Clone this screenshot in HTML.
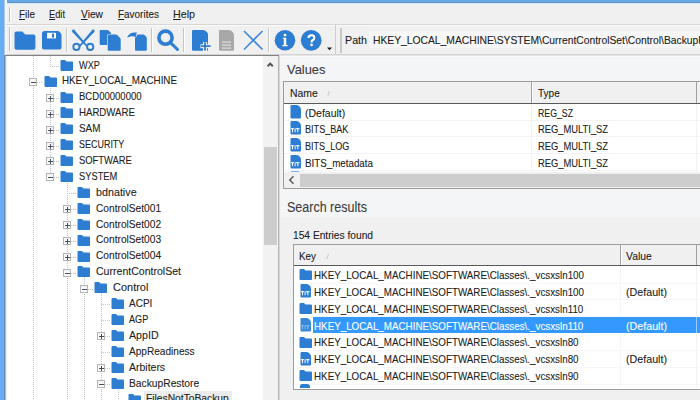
<!DOCTYPE html><html><head><meta charset="utf-8"><style>

html,body{margin:0;padding:0;}
body{width:700px;height:400px;overflow:hidden;position:relative;background:#f0f0f0;font-family:"Liberation Sans", sans-serif;}
.t{position:absolute;white-space:nowrap;transform-origin:0 0;line-height:1;-webkit-text-stroke:0.1px currentColor;}
.t u{text-decoration:underline;text-underline-offset:0.5px;text-decoration-thickness:1px;}

</style></head><body>
<div style="position:absolute;left:0px;top:0px;width:700px;height:5px;background:linear-gradient(#64a8e8 0 1px,#6aa6e0 1px 2px,#5f91c9 2px 3px,#d8ecf8 3px 4px,#e8f0f8 4px 5px);"></div>
<div style="position:absolute;left:0px;top:0px;width:7px;height:55px;background:linear-gradient(to right,#64b0f5 0 2px,#6ea8f0 2px 3px,#78a6e6 3px 4px,#a8c8ec 4px 5px,#f4f6f8 5px 7px);"></div>
<div style="position:absolute;left:0px;top:55px;width:7px;height:345px;background:linear-gradient(to right,#64b0f5 0 2px,#6ea8f0 2px 3px,#78a6e6 3px 4px,#6f8fb5 4px 5px,#a9bccc 5px 6px,#eaf2f9 6px 7px);"></div>
<div style="position:absolute;left:7px;top:5px;width:693px;height:19px;background:#f0f0f0;"></div>
<div style="position:absolute;left:9px;top:7px;width:1px;height:15px;background:#bdbdbd;"></div>
<div style="position:absolute;left:10px;top:7px;width:1px;height:15px;background:#ffffff;"></div>
<div class="t" style="left:19.3px;top:8.87px;font-size:11.5px;color:#222222;transform:scaleX(0.8566599999999999);"><u>F</u>ile</div>
<div class="t" style="left:49.3px;top:8.87px;font-size:11.5px;color:#222222;transform:scaleX(0.806925);"><u>E</u>dit</div>
<div class="t" style="left:80.7px;top:8.87px;font-size:11.5px;color:#222222;transform:scaleX(0.88711);"><u>V</u>iew</div>
<div class="t" style="left:117.6px;top:8.87px;font-size:11.5px;color:#222222;transform:scaleX(0.8647799999999999);"><u>F</u>avorites</div>
<div class="t" style="left:173.3px;top:8.87px;font-size:11.5px;color:#222222;transform:scaleX(0.9338);"><u>H</u>elp</div>
<div style="position:absolute;left:6px;top:24px;width:694px;height:1px;background:#d6d6d6;"></div>
<div style="position:absolute;left:6px;top:25px;width:694px;height:1px;background:#fbfbfb;"></div>
<div style="position:absolute;left:9px;top:27px;width:1px;height:24px;background:#bdbdbd;"></div>
<div style="position:absolute;left:10px;top:27px;width:1px;height:24px;background:#ffffff;"></div>
<div style="position:absolute;left:66px;top:28px;width:1px;height:24px;background:#c5c5c5;"></div>
<div style="position:absolute;left:67px;top:28px;width:1px;height:24px;background:#ffffff;"></div>
<div style="position:absolute;left:151px;top:28px;width:1px;height:24px;background:#c5c5c5;"></div>
<div style="position:absolute;left:152px;top:28px;width:1px;height:24px;background:#ffffff;"></div>
<div style="position:absolute;left:183px;top:28px;width:1px;height:24px;background:#c5c5c5;"></div>
<div style="position:absolute;left:184px;top:28px;width:1px;height:24px;background:#ffffff;"></div>
<div style="position:absolute;left:268px;top:28px;width:1px;height:24px;background:#c5c5c5;"></div>
<div style="position:absolute;left:269px;top:28px;width:1px;height:24px;background:#ffffff;"></div>
<svg style="position:absolute;left:14px;top:31px" width="22" height="20" viewBox="0 0 22 20"><path d="M0.5 2.5 Q0.5 0.6 2.4 0.6 L8.4 0.6 L11.2 3.6 L19.5 3.6 Q21.4 3.6 21.4 5.5 L21.4 17 Q21.4 18.8 19.5 18.8 L2.4 18.8 Q0.5 18.8 0.5 17 Z" fill="#2d7dd2"/></svg>
<svg style="position:absolute;left:42px;top:31px" width="20" height="20" viewBox="0 0 20 20"><path d="M0 2.5 Q0 0 2.5 0 L15.6 0 Q16.6 0 17.4 0.8 L18.7 2.1 Q19.5 2.9 19.5 4 L19.5 16 Q19.5 18.6 17 18.6 L2.5 18.6 Q0 18.6 0 16 Z" fill="#2d7dd2"/><rect x="5" y="1.8" width="9" height="5.6" fill="#fff"/><rect x="10" y="2.6" width="2" height="4" fill="#2d7dd2"/></svg>
<svg style="position:absolute;left:70px;top:29px" width="28" height="24" viewBox="0 0 28 24"><g fill="#2d7dd2"><path d="M2.357 2.934 L4.443 1.066 L17.596 16.666 L16.404 17.734 Z"/><path d="M24.243 2.934 L22.157 1.066 L9.004 16.666 L10.196 17.734 Z"/><circle cx="3.4" cy="2" r="1.4"/><circle cx="23.2" cy="2" r="1.4"/></g><g stroke="#2d7dd2" fill="none" stroke-width="1.9"><circle cx="6.4" cy="17.9" r="3.1"/><circle cx="20.2" cy="17.9" r="3.1"/></g></svg>
<svg style="position:absolute;left:99px;top:29px" width="23" height="23" viewBox="0 0 23 23"><path d="M0.7 1.9 Q0.7 0.9 1.7 0.9 L8.2 0.9 Q9 0.9 9.6 1.5 L11.4 3.3 Q12 3.9 12 4.7 L12 15 Q12 16 11 16 L1.7 16 Q0.7 16 0.7 15 Z" fill="#2d7dd2"/><path d="M8.7 6.5 Q8.7 5.5 9.7 5.5 L16.8 5.5 Q17.6 5.5 18.2 6.1 L21.1 9 Q21.7 9.6 21.7 10.4 L21.7 20.7 Q21.7 21.7 20.7 21.7 L9.7 21.7 Q8.7 21.7 8.7 20.7 Z" fill="#2d7dd2" stroke="#f0f0f0" stroke-width="1.2" paint-order="stroke"/></svg>
<svg style="position:absolute;left:124px;top:28px" width="24" height="24" viewBox="0 0 24 24"><path d="M11 9.6 L13.6 6.6 L19.2 6.6 Q20.2 6.6 21 7.4 L22 8.4 Q22.8 9.2 22.8 10.4 L22.8 21.8 Q22.8 22.8 21.8 22.8 L12 22.8 Q11 22.8 11 21.8 Z" fill="#2d7dd2"/><path d="M3.2 9.2 Q5.4 4.9 9.6 4.6 L12.8 4.4 L11.8 9 Q9 8 6.5 8.4 Q4.6 8.8 3.2 9.5 Z" fill="#2d7dd2" stroke="#f0f0f0" stroke-width="0.9" paint-order="stroke"/></svg>
<svg style="position:absolute;left:156px;top:28px" width="24" height="24" viewBox="0 0 24 24"><circle cx="9.5" cy="9.7" r="6.6" stroke="#2d7dd2" stroke-width="3.6" fill="none"/><path d="M14.5 14.7 L21.5 21.5" stroke="#2d7dd2" stroke-width="3" stroke-linecap="round"/></svg>
<svg style="position:absolute;left:191px;top:29px" width="22" height="23" viewBox="0 0 22 23"><path d="M1 2.2 Q1 1 2.2 1 L12 1 Q14 1 15.5 2.8 L17 4.6 L17 21.8 L2.2 21.8 Q1 21.8 1 20.6 Z" fill="#2d7dd2"/><path d="M14 13 L14 22 M9.5 17.2 L20 17.2" stroke="#f0f0f0" stroke-width="4"/><path d="M14 13.2 L14 21.6 M10 17.2 L19.6 17.2" stroke="#2d7dd2" stroke-width="1.8"/></svg>
<svg style="position:absolute;left:218px;top:29px" width="18" height="23" viewBox="0 0 18 23"><path d="M1 2.2 Q1 1 2.2 1 L11 1 Q13 1 14.2 2.6 L16 5 L16 20.6 Q16 21.8 14.8 21.8 L2.2 21.8 Q1 21.8 1 20.6 Z" fill="#a8a8a8"/><g fill="#e8e8e8"><rect x="4" y="12.6" width="9" height="1"/><rect x="4" y="15.6" width="9" height="1"/><rect x="4" y="18.6" width="9" height="1"/></g></svg>
<svg style="position:absolute;left:242px;top:29px" width="23" height="23" viewBox="0 0 23 23"><path d="M2 2 L20.5 20.5 M20.5 2 L2 20.5" stroke="#4189d6" stroke-width="1.6"/></svg>
<svg style="position:absolute;left:272.6px;top:29px" width="24" height="24" viewBox="0 0 24 24"><circle cx="12" cy="11.3" r="10.3" fill="#2d7dd2"/><circle cx="12" cy="6.1" r="1.45" fill="#fff"/><path d="M9.9 8.8 L13.2 8.8 L13.2 16 L14.6 16 L14.6 17.3 L9.4 17.3 L9.4 16 L10.8 16 L10.8 10 L9.9 10 Z" fill="#fff"/></svg>
<svg style="position:absolute;left:299px;top:29px" width="24" height="24" viewBox="0 0 24 24"><circle cx="12.2" cy="11.3" r="10.4" fill="#2d7dd2"/><path d="M9.5 9 Q9.5 6.3 12.4 6.3 Q15.3 6.3 15.3 8.7 Q15.3 10.4 13.6 11.2 Q12.6 11.7 12.6 12.8 L12.6 13.5" stroke="#fff" stroke-width="2.1" fill="none"/><circle cx="12.6" cy="15.9" r="1.35" fill="#fff"/></svg>
<svg style="position:absolute;left:327px;top:47px" width="6" height="4" viewBox="0 0 6 4"><path d="M0 0.5 L5 0.5 L2.5 3.2 Z" fill="#1a1a1a"/></svg>
<div style="position:absolute;left:335px;top:25px;width:1px;height:29px;background:#cdcdcd;"></div>
<div style="position:absolute;left:340px;top:28px;width:2px;height:25px;background:#c8c8c8;"></div>
<div class="t" style="left:344.5px;top:34.87px;font-size:11.5px;color:#222222;transform:scaleX(0.93);">Path</div>
<div style="position:absolute;left:369px;top:31px;width:331px;height:17px;background:#f7f7f7;"></div>
<div class="t" style="left:373.0px;top:34.87px;font-size:11.5px;color:#222222;transform:scaleX(0.896);">HKEY_LOCAL_MACHINE\SYSTEM\CurrentControlSet\Control\BackupRestore\FilesNotToBackup</div>
<div style="position:absolute;left:6px;top:54px;width:694px;height:1px;background:#d2d2d2;"></div>
<div style="position:absolute;left:5px;top:55px;width:274px;height:1px;background:#828282;"></div>
<div style="position:absolute;left:279px;top:55px;width:421px;height:1px;background:#e6e6e6;"></div>
<div style="position:absolute;left:7px;top:56px;width:256px;height:344px;background:#ffffff;"></div>
<div style="position:absolute;left:263px;top:56px;width:15px;height:344px;background:#f2f2f2;"></div>
<div style="position:absolute;left:264px;top:147px;width:13px;height:98px;background:#cdcdcd;"></div>
<svg style="position:absolute;left:266px;top:61px" width="10" height="8" viewBox="0 0 10 8"><path d="M1.6 5.3 L4.2 2.6 L6.8 5.3" stroke="#555" stroke-width="2" fill="none"/></svg>
<div style="position:absolute;left:278px;top:56px;width:1px;height:344px;background:#b4b4b4;"></div>
<div style="position:absolute;left:279px;top:56px;width:1px;height:344px;background:#d8d8d8;"></div>
<div style="position:absolute;left:144px;top:390.6px;width:88px;height:16px;background:#ececec;"></div>
<div style="position:absolute;left:33px;top:56.00px;width:1px;height:344.00px;background:repeating-linear-gradient(to bottom,#c4c4c4 0 1px,transparent 1px 2px)"></div>
<div style="position:absolute;left:50px;top:56.00px;width:1px;height:10.00px;background:repeating-linear-gradient(to bottom,#c4c4c4 0 1px,transparent 1px 2px)"></div>
<div style="position:absolute;left:50px;top:85.90px;width:1px;height:91.40px;background:repeating-linear-gradient(to bottom,#c4c4c4 0 1px,transparent 1px 2px)"></div>
<div style="position:absolute;left:67px;top:181.30px;width:1px;height:87.40px;background:repeating-linear-gradient(to bottom,#c4c4c4 0 1px,transparent 1px 2px)"></div>
<div style="position:absolute;left:67px;top:277.70px;width:1px;height:122.30px;background:repeating-linear-gradient(to bottom,#c4c4c4 0 1px,transparent 1px 2px)"></div>
<div style="position:absolute;left:84px;top:276.70px;width:1px;height:7.90px;background:repeating-linear-gradient(to bottom,#c4c4c4 0 1px,transparent 1px 2px)"></div>
<div style="position:absolute;left:84px;top:293.60px;width:1px;height:106.40px;background:repeating-linear-gradient(to bottom,#c4c4c4 0 1px,transparent 1px 2px)"></div>
<div style="position:absolute;left:101px;top:292.60px;width:1px;height:107.40px;background:repeating-linear-gradient(to bottom,#c4c4c4 0 1px,transparent 1px 2px)"></div>
<div style="position:absolute;left:118px;top:388.00px;width:1px;height:12.00px;background:repeating-linear-gradient(to bottom,#c4c4c4 0 1px,transparent 1px 2px)"></div>
<div style="position:absolute;left:50.00px;top:66.00px;width:9.60px;height:1px;background:repeating-linear-gradient(to right,#c4c4c4 0 1px,transparent 1px 2px)"></div>
<svg style="position:absolute;left:60.2px;top:59.7px" width="14" height="12" viewBox="0 0 14 12"><path d="M0.5 1 Q0.5 0 1.5 0 L5 0 L6.5 1.6 L12 1.6 Q13 1.6 13 2.6 L13 10.2 Q13 11 12 11 L1.5 11 Q0.5 11 0.5 10 Z" fill="#2d7dd2"/></svg>
<div class="t" style="left:79.19999999999999px;top:59.57px;font-size:11.5px;color:#222222;transform:scaleX(0.7957599999999999);">WXP</div>
<div style="position:absolute;left:33.00px;top:82.00px;width:10.00px;height:1px;background:repeating-linear-gradient(to right,#c4c4c4 0 1px,transparent 1px 2px)"></div>
<div style="position:absolute;left:29px;top:78px;width:6px;height:6px;border:1px solid #b4b4b4;background:linear-gradient(#f4f4f4,#ffffff)"></div>
<div style="position:absolute;left:31px;top:82px;width:5px;height:1px;background:#4a5060;"></div>
<svg style="position:absolute;left:43.6px;top:75.60000000000001px" width="14" height="12" viewBox="0 0 14 12"><path d="M0.5 1 Q0.5 0 1.5 0 L5 0 L6.5 1.6 L12 1.6 Q13 1.6 13 2.6 L13 10.2 Q13 11 12 11 L1.5 11 Q0.5 11 0.5 10 Z" fill="#2d7dd2"/></svg>
<div class="t" style="left:62.3px;top:75.47px;font-size:11.5px;color:#222222;transform:scaleX(0.8525999999999999);">HKEY_LOCAL_MACHINE</div>
<div style="position:absolute;left:50.00px;top:98.00px;width:9.60px;height:1px;background:repeating-linear-gradient(to right,#c4c4c4 0 1px,transparent 1px 2px)"></div>
<div style="position:absolute;left:46px;top:94px;width:6px;height:6px;border:1px solid #b4b4b4;background:linear-gradient(#f4f4f4,#ffffff)"></div>
<div style="position:absolute;left:48px;top:98px;width:5px;height:1px;background:#4a5060;"></div>
<div style="position:absolute;left:50px;top:96px;width:1px;height:5px;background:#4a5060;"></div>
<svg style="position:absolute;left:60.2px;top:91.5px" width="14" height="12" viewBox="0 0 14 12"><path d="M0.5 1 Q0.5 0 1.5 0 L5 0 L6.5 1.6 L12 1.6 Q13 1.6 13 2.6 L13 10.2 Q13 11 12 11 L1.5 11 Q0.5 11 0.5 10 Z" fill="#2d7dd2"/></svg>
<div class="t" style="left:79.19999999999999px;top:91.37px;font-size:11.5px;color:#222222;transform:scaleX(0.8292549999999999);">BCD00000000</div>
<div style="position:absolute;left:50.00px;top:114.00px;width:9.60px;height:1px;background:repeating-linear-gradient(to right,#c4c4c4 0 1px,transparent 1px 2px)"></div>
<div style="position:absolute;left:46px;top:110px;width:6px;height:6px;border:1px solid #b4b4b4;background:linear-gradient(#f4f4f4,#ffffff)"></div>
<div style="position:absolute;left:48px;top:114px;width:5px;height:1px;background:#4a5060;"></div>
<div style="position:absolute;left:50px;top:112px;width:1px;height:5px;background:#4a5060;"></div>
<svg style="position:absolute;left:60.2px;top:107.4px" width="14" height="12" viewBox="0 0 14 12"><path d="M0.5 1 Q0.5 0 1.5 0 L5 0 L6.5 1.6 L12 1.6 Q13 1.6 13 2.6 L13 10.2 Q13 11 12 11 L1.5 11 Q0.5 11 0.5 10 Z" fill="#2d7dd2"/></svg>
<div class="t" style="left:79.19999999999999px;top:107.27px;font-size:11.5px;color:#222222;transform:scaleX(0.8383899999999999);">HARDWARE</div>
<div style="position:absolute;left:50.00px;top:130.00px;width:9.60px;height:1px;background:repeating-linear-gradient(to right,#c4c4c4 0 1px,transparent 1px 2px)"></div>
<div style="position:absolute;left:46px;top:126px;width:6px;height:6px;border:1px solid #b4b4b4;background:linear-gradient(#f4f4f4,#ffffff)"></div>
<div style="position:absolute;left:48px;top:130px;width:5px;height:1px;background:#4a5060;"></div>
<div style="position:absolute;left:50px;top:128px;width:1px;height:5px;background:#4a5060;"></div>
<svg style="position:absolute;left:60.2px;top:123.30000000000001px" width="14" height="12" viewBox="0 0 14 12"><path d="M0.5 1 Q0.5 0 1.5 0 L5 0 L6.5 1.6 L12 1.6 Q13 1.6 13 2.6 L13 10.2 Q13 11 12 11 L1.5 11 Q0.5 11 0.5 10 Z" fill="#2d7dd2"/></svg>
<div class="t" style="left:79.19999999999999px;top:123.17px;font-size:11.5px;color:#222222;transform:scaleX(0.8627499999999999);">SAM</div>
<div style="position:absolute;left:50.00px;top:146.00px;width:9.60px;height:1px;background:repeating-linear-gradient(to right,#c4c4c4 0 1px,transparent 1px 2px)"></div>
<div style="position:absolute;left:46px;top:142px;width:6px;height:6px;border:1px solid #b4b4b4;background:linear-gradient(#f4f4f4,#ffffff)"></div>
<div style="position:absolute;left:48px;top:146px;width:5px;height:1px;background:#4a5060;"></div>
<div style="position:absolute;left:50px;top:144px;width:1px;height:5px;background:#4a5060;"></div>
<svg style="position:absolute;left:60.2px;top:139.2px" width="14" height="12" viewBox="0 0 14 12"><path d="M0.5 1 Q0.5 0 1.5 0 L5 0 L6.5 1.6 L12 1.6 Q13 1.6 13 2.6 L13 10.2 Q13 11 12 11 L1.5 11 Q0.5 11 0.5 10 Z" fill="#2d7dd2"/></svg>
<div class="t" style="left:79.19999999999999px;top:139.07px;font-size:11.5px;color:#222222;transform:scaleX(0.77952);">SECURITY</div>
<div style="position:absolute;left:50.00px;top:161.00px;width:9.60px;height:1px;background:repeating-linear-gradient(to right,#c4c4c4 0 1px,transparent 1px 2px)"></div>
<div style="position:absolute;left:46px;top:157px;width:6px;height:6px;border:1px solid #b4b4b4;background:linear-gradient(#f4f4f4,#ffffff)"></div>
<div style="position:absolute;left:48px;top:161px;width:5px;height:1px;background:#4a5060;"></div>
<div style="position:absolute;left:50px;top:159px;width:1px;height:5px;background:#4a5060;"></div>
<svg style="position:absolute;left:60.2px;top:155.10000000000002px" width="14" height="12" viewBox="0 0 14 12"><path d="M0.5 1 Q0.5 0 1.5 0 L5 0 L6.5 1.6 L12 1.6 Q13 1.6 13 2.6 L13 10.2 Q13 11 12 11 L1.5 11 Q0.5 11 0.5 10 Z" fill="#2d7dd2"/></svg>
<div class="t" style="left:79.19999999999999px;top:154.97px;font-size:11.5px;color:#222222;transform:scaleX(0.81606);">SOFTWARE</div>
<div style="position:absolute;left:50.00px;top:177.00px;width:9.60px;height:1px;background:repeating-linear-gradient(to right,#c4c4c4 0 1px,transparent 1px 2px)"></div>
<div style="position:absolute;left:46px;top:173px;width:6px;height:6px;border:1px solid #b4b4b4;background:linear-gradient(#f4f4f4,#ffffff)"></div>
<div style="position:absolute;left:48px;top:177px;width:5px;height:1px;background:#4a5060;"></div>
<svg style="position:absolute;left:60.2px;top:171.0px" width="14" height="12" viewBox="0 0 14 12"><path d="M0.5 1 Q0.5 0 1.5 0 L5 0 L6.5 1.6 L12 1.6 Q13 1.6 13 2.6 L13 10.2 Q13 11 12 11 L1.5 11 Q0.5 11 0.5 10 Z" fill="#2d7dd2"/></svg>
<div class="t" style="left:79.19999999999999px;top:170.87px;font-size:11.5px;color:#222222;transform:scaleX(0.810985);">SYSTEM</div>
<div style="position:absolute;left:67.00px;top:193.00px;width:9.00px;height:1px;background:repeating-linear-gradient(to right,#c4c4c4 0 1px,transparent 1px 2px)"></div>
<svg style="position:absolute;left:76.6px;top:186.9px" width="14" height="12" viewBox="0 0 14 12"><path d="M0.5 1 Q0.5 0 1.5 0 L5 0 L6.5 1.6 L12 1.6 Q13 1.6 13 2.6 L13 10.2 Q13 11 12 11 L1.5 11 Q0.5 11 0.5 10 Z" fill="#2d7dd2"/></svg>
<div class="t" style="left:95.9px;top:186.77px;font-size:11.5px;color:#222222;transform:scaleX(0.9338);">bdnative</div>
<div style="position:absolute;left:67.00px;top:209.00px;width:9.00px;height:1px;background:repeating-linear-gradient(to right,#c4c4c4 0 1px,transparent 1px 2px)"></div>
<div style="position:absolute;left:63px;top:205px;width:6px;height:6px;border:1px solid #b4b4b4;background:linear-gradient(#f4f4f4,#ffffff)"></div>
<div style="position:absolute;left:65px;top:209px;width:5px;height:1px;background:#4a5060;"></div>
<div style="position:absolute;left:67px;top:207px;width:1px;height:5px;background:#4a5060;"></div>
<svg style="position:absolute;left:76.6px;top:202.8px" width="14" height="12" viewBox="0 0 14 12"><path d="M0.5 1 Q0.5 0 1.5 0 L5 0 L6.5 1.6 L12 1.6 Q13 1.6 13 2.6 L13 10.2 Q13 11 12 11 L1.5 11 Q0.5 11 0.5 10 Z" fill="#2d7dd2"/></svg>
<div class="t" style="left:95.9px;top:202.67px;font-size:11.5px;color:#222222;transform:scaleX(0.8850799999999999);">ControlSet001</div>
<div style="position:absolute;left:67.00px;top:225.00px;width:9.00px;height:1px;background:repeating-linear-gradient(to right,#c4c4c4 0 1px,transparent 1px 2px)"></div>
<div style="position:absolute;left:63px;top:221px;width:6px;height:6px;border:1px solid #b4b4b4;background:linear-gradient(#f4f4f4,#ffffff)"></div>
<div style="position:absolute;left:65px;top:225px;width:5px;height:1px;background:#4a5060;"></div>
<div style="position:absolute;left:67px;top:223px;width:1px;height:5px;background:#4a5060;"></div>
<svg style="position:absolute;left:76.6px;top:218.7px" width="14" height="12" viewBox="0 0 14 12"><path d="M0.5 1 Q0.5 0 1.5 0 L5 0 L6.5 1.6 L12 1.6 Q13 1.6 13 2.6 L13 10.2 Q13 11 12 11 L1.5 11 Q0.5 11 0.5 10 Z" fill="#2d7dd2"/></svg>
<div class="t" style="left:95.9px;top:218.57px;font-size:11.5px;color:#222222;transform:scaleX(0.8850799999999999);">ControlSet002</div>
<div style="position:absolute;left:67.00px;top:241.00px;width:9.00px;height:1px;background:repeating-linear-gradient(to right,#c4c4c4 0 1px,transparent 1px 2px)"></div>
<div style="position:absolute;left:63px;top:237px;width:6px;height:6px;border:1px solid #b4b4b4;background:linear-gradient(#f4f4f4,#ffffff)"></div>
<div style="position:absolute;left:65px;top:241px;width:5px;height:1px;background:#4a5060;"></div>
<div style="position:absolute;left:67px;top:239px;width:1px;height:5px;background:#4a5060;"></div>
<svg style="position:absolute;left:76.6px;top:234.60000000000002px" width="14" height="12" viewBox="0 0 14 12"><path d="M0.5 1 Q0.5 0 1.5 0 L5 0 L6.5 1.6 L12 1.6 Q13 1.6 13 2.6 L13 10.2 Q13 11 12 11 L1.5 11 Q0.5 11 0.5 10 Z" fill="#2d7dd2"/></svg>
<div class="t" style="left:95.9px;top:234.47px;font-size:11.5px;color:#222222;transform:scaleX(0.8850799999999999);">ControlSet003</div>
<div style="position:absolute;left:67.00px;top:257.00px;width:9.00px;height:1px;background:repeating-linear-gradient(to right,#c4c4c4 0 1px,transparent 1px 2px)"></div>
<div style="position:absolute;left:63px;top:253px;width:6px;height:6px;border:1px solid #b4b4b4;background:linear-gradient(#f4f4f4,#ffffff)"></div>
<div style="position:absolute;left:65px;top:257px;width:5px;height:1px;background:#4a5060;"></div>
<div style="position:absolute;left:67px;top:255px;width:1px;height:5px;background:#4a5060;"></div>
<svg style="position:absolute;left:76.6px;top:250.5px" width="14" height="12" viewBox="0 0 14 12"><path d="M0.5 1 Q0.5 0 1.5 0 L5 0 L6.5 1.6 L12 1.6 Q13 1.6 13 2.6 L13 10.2 Q13 11 12 11 L1.5 11 Q0.5 11 0.5 10 Z" fill="#2d7dd2"/></svg>
<div class="t" style="left:95.9px;top:250.37px;font-size:11.5px;color:#222222;transform:scaleX(0.8850799999999999);">ControlSet004</div>
<div style="position:absolute;left:67.00px;top:273.00px;width:9.00px;height:1px;background:repeating-linear-gradient(to right,#c4c4c4 0 1px,transparent 1px 2px)"></div>
<div style="position:absolute;left:63px;top:269px;width:6px;height:6px;border:1px solid #b4b4b4;background:linear-gradient(#f4f4f4,#ffffff)"></div>
<div style="position:absolute;left:65px;top:273px;width:5px;height:1px;background:#4a5060;"></div>
<svg style="position:absolute;left:76.6px;top:266.40000000000003px" width="14" height="12" viewBox="0 0 14 12"><path d="M0.5 1 Q0.5 0 1.5 0 L5 0 L6.5 1.6 L12 1.6 Q13 1.6 13 2.6 L13 10.2 Q13 11 12 11 L1.5 11 Q0.5 11 0.5 10 Z" fill="#2d7dd2"/></svg>
<div class="t" style="left:95.9px;top:266.27px;font-size:11.5px;color:#222222;transform:scaleX(0.9175599999999999);">CurrentControlSet</div>
<div style="position:absolute;left:84.00px;top:289.00px;width:9.00px;height:1px;background:repeating-linear-gradient(to right,#c4c4c4 0 1px,transparent 1px 2px)"></div>
<div style="position:absolute;left:80px;top:285px;width:6px;height:6px;border:1px solid #b4b4b4;background:linear-gradient(#f4f4f4,#ffffff)"></div>
<div style="position:absolute;left:82px;top:289px;width:5px;height:1px;background:#4a5060;"></div>
<svg style="position:absolute;left:93.6px;top:282.3px" width="14" height="12" viewBox="0 0 14 12"><path d="M0.5 1 Q0.5 0 1.5 0 L5 0 L6.5 1.6 L12 1.6 Q13 1.6 13 2.6 L13 10.2 Q13 11 12 11 L1.5 11 Q0.5 11 0.5 10 Z" fill="#2d7dd2"/></svg>
<div class="t" style="left:112.8px;top:282.17px;font-size:11.5px;color:#222222;transform:scaleX(0.9540999999999998);">Control</div>
<div style="position:absolute;left:100.80px;top:304.00px;width:9.20px;height:1px;background:repeating-linear-gradient(to right,#c4c4c4 0 1px,transparent 1px 2px)"></div>
<svg style="position:absolute;left:110.6px;top:298.2px" width="14" height="12" viewBox="0 0 14 12"><path d="M0.5 1 Q0.5 0 1.5 0 L5 0 L6.5 1.6 L12 1.6 Q13 1.6 13 2.6 L13 10.2 Q13 11 12 11 L1.5 11 Q0.5 11 0.5 10 Z" fill="#2d7dd2"/></svg>
<div class="t" style="left:129.3px;top:298.07px;font-size:11.5px;color:#222222;transform:scaleX(0.86884);">ACPI</div>
<div style="position:absolute;left:100.80px;top:320.00px;width:9.20px;height:1px;background:repeating-linear-gradient(to right,#c4c4c4 0 1px,transparent 1px 2px)"></div>
<svg style="position:absolute;left:110.6px;top:314.1px" width="14" height="12" viewBox="0 0 14 12"><path d="M0.5 1 Q0.5 0 1.5 0 L5 0 L6.5 1.6 L12 1.6 Q13 1.6 13 2.6 L13 10.2 Q13 11 12 11 L1.5 11 Q0.5 11 0.5 10 Z" fill="#2d7dd2"/></svg>
<div class="t" style="left:129.3px;top:313.97px;font-size:11.5px;color:#222222;transform:scaleX(0.7957599999999999);">AGP</div>
<div style="position:absolute;left:100.80px;top:336.00px;width:9.20px;height:1px;background:repeating-linear-gradient(to right,#c4c4c4 0 1px,transparent 1px 2px)"></div>
<div style="position:absolute;left:97px;top:332px;width:6px;height:6px;border:1px solid #b4b4b4;background:linear-gradient(#f4f4f4,#ffffff)"></div>
<div style="position:absolute;left:99px;top:336px;width:5px;height:1px;background:#4a5060;"></div>
<div style="position:absolute;left:101px;top:334px;width:1px;height:5px;background:#4a5060;"></div>
<svg style="position:absolute;left:110.6px;top:330.0px" width="14" height="12" viewBox="0 0 14 12"><path d="M0.5 1 Q0.5 0 1.5 0 L5 0 L6.5 1.6 L12 1.6 Q13 1.6 13 2.6 L13 10.2 Q13 11 12 11 L1.5 11 Q0.5 11 0.5 10 Z" fill="#2d7dd2"/></svg>
<div class="t" style="left:129.3px;top:329.87px;font-size:11.5px;color:#222222;transform:scaleX(0.9266949999999999);">AppID</div>
<div style="position:absolute;left:100.80px;top:352.00px;width:9.20px;height:1px;background:repeating-linear-gradient(to right,#c4c4c4 0 1px,transparent 1px 2px)"></div>
<svg style="position:absolute;left:110.6px;top:345.9px" width="14" height="12" viewBox="0 0 14 12"><path d="M0.5 1 Q0.5 0 1.5 0 L5 0 L6.5 1.6 L12 1.6 Q13 1.6 13 2.6 L13 10.2 Q13 11 12 11 L1.5 11 Q0.5 11 0.5 10 Z" fill="#2d7dd2"/></svg>
<div class="t" style="left:129.3px;top:345.77px;font-size:11.5px;color:#222222;transform:scaleX(0.877975);">AppReadiness</div>
<div style="position:absolute;left:100.80px;top:368.00px;width:9.20px;height:1px;background:repeating-linear-gradient(to right,#c4c4c4 0 1px,transparent 1px 2px)"></div>
<div style="position:absolute;left:97px;top:364px;width:6px;height:6px;border:1px solid #b4b4b4;background:linear-gradient(#f4f4f4,#ffffff)"></div>
<div style="position:absolute;left:99px;top:368px;width:5px;height:1px;background:#4a5060;"></div>
<div style="position:absolute;left:101px;top:366px;width:1px;height:5px;background:#4a5060;"></div>
<svg style="position:absolute;left:110.6px;top:361.8px" width="14" height="12" viewBox="0 0 14 12"><path d="M0.5 1 Q0.5 0 1.5 0 L5 0 L6.5 1.6 L12 1.6 Q13 1.6 13 2.6 L13 10.2 Q13 11 12 11 L1.5 11 Q0.5 11 0.5 10 Z" fill="#2d7dd2"/></svg>
<div class="t" style="left:129.3px;top:361.67px;font-size:11.5px;color:#222222;transform:scaleX(0.9114699999999999);">Arbiters</div>
<div style="position:absolute;left:100.80px;top:384.00px;width:9.20px;height:1px;background:repeating-linear-gradient(to right,#c4c4c4 0 1px,transparent 1px 2px)"></div>
<div style="position:absolute;left:97px;top:380px;width:6px;height:6px;border:1px solid #b4b4b4;background:linear-gradient(#f4f4f4,#ffffff)"></div>
<div style="position:absolute;left:99px;top:384px;width:5px;height:1px;background:#4a5060;"></div>
<svg style="position:absolute;left:110.6px;top:377.7px" width="14" height="12" viewBox="0 0 14 12"><path d="M0.5 1 Q0.5 0 1.5 0 L5 0 L6.5 1.6 L12 1.6 Q13 1.6 13 2.6 L13 10.2 Q13 11 12 11 L1.5 11 Q0.5 11 0.5 10 Z" fill="#2d7dd2"/></svg>
<div class="t" style="left:129.3px;top:377.57px;font-size:11.5px;color:#222222;transform:scaleX(0.8921849999999999);">BackupRestore</div>
<div style="position:absolute;left:118.00px;top:400.00px;width:9.00px;height:1px;background:repeating-linear-gradient(to right,#c4c4c4 0 1px,transparent 1px 2px)"></div>
<svg style="position:absolute;left:127.6px;top:393.6px" width="14" height="12" viewBox="0 0 14 12"><path d="M0.5 1 Q0.5 0 1.5 0 L5 0 L6.5 1.6 L12 1.6 Q13 1.6 13 2.6 L13 10.2 Q13 11 12 11 L1.5 11 Q0.5 11 0.5 10 Z" fill="#2d7dd2"/></svg>
<div class="t" style="left:146.3px;top:393.47px;font-size:11.5px;color:#222222;transform:scaleX(0.8931999999999999);">FilesNotToBackup</div>
<div style="position:absolute;left:280px;top:56px;width:420px;height:25px;background:#f4f5f7;"></div>
<div style="position:absolute;left:280px;top:56px;width:420px;height:1px;background:#fafafa;"></div>
<div style="position:absolute;left:280px;top:189px;width:420px;height:29px;background:#f4f5f7;"></div>
<div class="t" style="left:286.5px;top:62.57px;font-size:13.5px;color:#3c3c3c;transform:scaleX(0.955);">Values</div>
<div style="position:absolute;left:283px;top:81px;width:420px;height:108px;background:#ffffff;border:1px solid #9c9c9c;box-sizing:border-box;"></div>
<div style="position:absolute;left:284px;top:82px;width:416px;height:21px;background:#f0f0f0;"></div>
<div style="position:absolute;left:284px;top:103px;width:416px;height:1px;background:#5a5a5a;"></div>
<div style="position:absolute;left:531px;top:82px;width:1px;height:21px;background:#a0a0a0;"></div>
<div style="position:absolute;left:532px;top:82px;width:1px;height:21px;background:#ffffff;"></div>
<div style="position:absolute;left:696px;top:82px;width:1px;height:21px;background:#a0a0a0;"></div>
<div class="t" style="left:289.9px;top:87.87px;font-size:11.5px;color:#222222;transform:scaleX(0.905);">Name</div>
<div class="t" style="left:327.5px;top:90.03px;font-size:8px;color:#bbbbbb;transform:scaleX(1);">/</div>
<div class="t" style="left:538.2px;top:87.87px;font-size:11.5px;color:#222222;transform:scaleX(0.87);">Type</div>
<div style="position:absolute;left:284px;top:120px;width:416px;height:1px;background:#f3f3f3;"></div>
<svg style="position:absolute;left:289.5px;top:104.5px" width="12" height="14" viewBox="0 0 12 14"><path d="M0.5 1 Q0.5 0 1.5 0 L6.5 0 Q8 0 9 1 L10 2 Q11 3 11 4.5 L11 12.5 Q11 13.5 10 13.5 L1.5 13.5 Q0.5 13.5 0.5 12.5 Z" fill="#2d7dd2"/></svg>
<div class="t" style="left:304.7px;top:107.67px;font-size:11.5px;color:#222222;transform:scaleX(0.9135);">(Default)</div>
<div class="t" style="left:537.5px;top:107.67px;font-size:11.5px;color:#222222;transform:scaleX(0.76125);">REG_SZ</div>
<div style="position:absolute;left:284px;top:136px;width:416px;height:1px;background:#f3f3f3;"></div>
<svg style="position:absolute;left:289.5px;top:121.17px" width="12" height="14" viewBox="0 0 12 14"><path d="M0.5 1 Q0.5 0 1.5 0 L6.5 0 Q8 0 9 1 L10 2 Q11 3 11 4.5 L11 12.5 Q11 13.5 10 13.5 L1.5 13.5 Q0.5 13.5 0.5 12.5 Z" fill="#2d7dd2"/><g fill="#fff"><rect x="1" y="7.2" width="3" height="1"/><rect x="2" y="7.2" width="1" height="4"/><rect x="4.6" y="7.2" width="1" height="4"/><rect x="6" y="7.2" width="3.6" height="1"/><rect x="7.3" y="7.2" width="1" height="4"/></g></svg>
<div class="t" style="left:304.7px;top:124.34px;font-size:11.5px;color:#222222;transform:scaleX(0.78967);">BITS_BAK</div>
<div class="t" style="left:537.5px;top:124.34px;font-size:11.5px;color:#222222;transform:scaleX(0.8140299999999999);">REG_MULTI_SZ</div>
<div style="position:absolute;left:284px;top:153px;width:416px;height:1px;background:#f3f3f3;"></div>
<svg style="position:absolute;left:289.5px;top:137.84px" width="12" height="14" viewBox="0 0 12 14"><path d="M0.5 1 Q0.5 0 1.5 0 L6.5 0 Q8 0 9 1 L10 2 Q11 3 11 4.5 L11 12.5 Q11 13.5 10 13.5 L1.5 13.5 Q0.5 13.5 0.5 12.5 Z" fill="#2d7dd2"/><g fill="#fff"><rect x="1" y="7.2" width="3" height="1"/><rect x="2" y="7.2" width="1" height="4"/><rect x="4.6" y="7.2" width="1" height="4"/><rect x="6" y="7.2" width="3.6" height="1"/><rect x="7.3" y="7.2" width="1" height="4"/></g></svg>
<div class="t" style="left:304.7px;top:141.01px;font-size:11.5px;color:#222222;transform:scaleX(0.7876399999999999);">BITS_LOG</div>
<div class="t" style="left:537.5px;top:141.01px;font-size:11.5px;color:#222222;transform:scaleX(0.8140299999999999);">REG_MULTI_SZ</div>
<div style="position:absolute;left:284px;top:170px;width:416px;height:1px;background:#f3f3f3;"></div>
<svg style="position:absolute;left:289.5px;top:154.51px" width="12" height="14" viewBox="0 0 12 14"><path d="M0.5 1 Q0.5 0 1.5 0 L6.5 0 Q8 0 9 1 L10 2 Q11 3 11 4.5 L11 12.5 Q11 13.5 10 13.5 L1.5 13.5 Q0.5 13.5 0.5 12.5 Z" fill="#2d7dd2"/><g fill="#fff"><rect x="1" y="7.2" width="3" height="1"/><rect x="2" y="7.2" width="1" height="4"/><rect x="4.6" y="7.2" width="1" height="4"/><rect x="6" y="7.2" width="3.6" height="1"/><rect x="7.3" y="7.2" width="1" height="4"/></g></svg>
<div class="t" style="left:304.7px;top:157.68px;font-size:11.5px;color:#222222;transform:scaleX(0.8505699999999999);">BITS_metadata</div>
<div class="t" style="left:537.5px;top:157.68px;font-size:11.5px;color:#222222;transform:scaleX(0.8140299999999999);">REG_MULTI_SZ</div>
<div style="position:absolute;left:284px;top:171px;width:20px;height:1px;overflow:hidden"></div>
<div style="position:absolute;left:531px;top:104px;width:1px;height:68px;background:#f3f3f3;"></div>
<div style="position:absolute;left:696px;top:104px;width:1px;height:68px;background:#f3f3f3;"></div>
<div style="position:absolute;left:291px;top:171px;width:8px;height:1px;background:#7fb0e6;"></div>
<div style="position:absolute;left:284px;top:172px;width:416px;height:16px;background:#f0f0f0;"></div>
<div style="position:absolute;left:300px;top:174px;width:400px;height:12.5px;background:#cdcdcd;"></div>
<svg style="position:absolute;left:287px;top:175px" width="9" height="10" viewBox="0 0 9 10"><path d="M6.5 1.2 L2.8 5 L6.5 8.8" stroke="#606060" stroke-width="1.6" fill="none"/></svg>
<div class="t" style="left:286.6px;top:199.95px;font-size:14px;color:#3c3c3c;transform:scaleX(0.893);">Search results</div>
<div class="t" style="left:292.8px;top:229.67px;font-size:11.5px;color:#222222;transform:scaleX(0.888);">154 Entries found</div>
<div style="position:absolute;left:293px;top:244px;width:410px;height:146px;background:#ffffff;border:1px solid #9c9c9c;box-sizing:border-box;"></div>
<div style="position:absolute;left:294px;top:245px;width:406px;height:20px;background:#f0f0f0;"></div>
<div style="position:absolute;left:294px;top:265px;width:406px;height:1px;background:#5a5a5a;"></div>
<div style="position:absolute;left:620px;top:245px;width:1px;height:20px;background:#a0a0a0;"></div>
<div style="position:absolute;left:621px;top:245px;width:1px;height:20px;background:#ffffff;"></div>
<div style="position:absolute;left:696px;top:245px;width:1px;height:20px;background:#a0a0a0;"></div>
<div class="t" style="left:299.4px;top:250.57px;font-size:11.5px;color:#222222;transform:scaleX(0.86);">Key</div>
<div class="t" style="left:326.5px;top:252.73px;font-size:8px;color:#bbbbbb;transform:scaleX(1);">/</div>
<div class="t" style="left:626.3px;top:250.57px;font-size:11.5px;color:#222222;transform:scaleX(0.9);">Value</div>
<div style="position:absolute;left:620px;top:266px;width:1px;height:122px;background:#f5f5f5;"></div>
<div style="position:absolute;left:696px;top:266px;width:1px;height:122px;background:#f3f3f3;"></div>
<div style="position:absolute;left:294px;top:282.5px;width:406px;height:1px;background:#f7f7f7;"></div>
<svg style="position:absolute;left:299px;top:269.0px" width="14" height="12" viewBox="0 0 14 12"><path d="M0.5 1 Q0.5 0 1.5 0 L5 0 L6.5 1.6 L12 1.6 Q13 1.6 13 2.6 L13 10.2 Q13 11 12 11 L1.5 11 Q0.5 11 0.5 10 Z" fill="#2d7dd2"/></svg>
<div class="t" style="left:313.9px;top:269.87px;font-size:11.5px;color:#222222;transform:scaleX(0.853);">HKEY_LOCAL_MACHINE\SOFTWARE\Classes\._vcsxsln100</div>
<div style="position:absolute;left:294px;top:299.4px;width:406px;height:1px;background:#f7f7f7;"></div>
<svg style="position:absolute;left:299.5px;top:284.4px" width="12" height="14" viewBox="0 0 12 14"><path d="M0.5 1 Q0.5 0 1.5 0 L6.5 0 Q8 0 9 1 L10 2 Q11 3 11 4.5 L11 12.5 Q11 13.5 10 13.5 L1.5 13.5 Q0.5 13.5 0.5 12.5 Z" fill="#2d7dd2"/><g fill="#fff"><rect x="1" y="7.2" width="3" height="1"/><rect x="2" y="7.2" width="1" height="4"/><rect x="4.6" y="7.2" width="1" height="4"/><rect x="6" y="7.2" width="3.6" height="1"/><rect x="7.3" y="7.2" width="1" height="4"/></g></svg>
<div class="t" style="left:313.9px;top:286.77px;font-size:11.5px;color:#222222;transform:scaleX(0.853);">HKEY_LOCAL_MACHINE\SOFTWARE\Classes\._vcsxsln100</div>
<div class="t" style="left:625.8px;top:286.77px;font-size:11.5px;color:#222222;transform:scaleX(0.93);">(Default)</div>
<div style="position:absolute;left:294px;top:316.3px;width:406px;height:1px;background:#f7f7f7;"></div>
<svg style="position:absolute;left:299px;top:302.8px" width="14" height="12" viewBox="0 0 14 12"><path d="M0.5 1 Q0.5 0 1.5 0 L5 0 L6.5 1.6 L12 1.6 Q13 1.6 13 2.6 L13 10.2 Q13 11 12 11 L1.5 11 Q0.5 11 0.5 10 Z" fill="#2d7dd2"/></svg>
<div class="t" style="left:313.9px;top:303.67px;font-size:11.5px;color:#222222;transform:scaleX(0.853);">HKEY_LOCAL_MACHINE\SOFTWARE\Classes\._vcsxsln110</div>
<div style="position:absolute;left:312.5px;top:317.2px;width:388px;height:16px;background:#3399ff;"></div>
<svg style="position:absolute;left:299.5px;top:318.2px" width="12" height="14" viewBox="0 0 12 14"><path d="M0.5 1 Q0.5 0 1.5 0 L6.5 0 Q8 0 9 1 L10 2 Q11 3 11 4.5 L11 12.5 Q11 13.5 10 13.5 L1.5 13.5 Q0.5 13.5 0.5 12.5 Z" fill="#3a89d8"/><g fill="#80bdf2"><rect x="1" y="7.2" width="3" height="1"/><rect x="2" y="7.2" width="1" height="4"/><rect x="4.6" y="7.2" width="1" height="4"/><rect x="6" y="7.2" width="3.6" height="1"/><rect x="7.3" y="7.2" width="1" height="4"/></g></svg>
<div class="t" style="left:313.9px;top:320.57px;font-size:11.5px;color:#ffffff;transform:scaleX(0.853);">HKEY_LOCAL_MACHINE\SOFTWARE\Classes\._vcsxsln110</div>
<div class="t" style="left:625.8px;top:320.57px;font-size:11.5px;color:#ffffff;transform:scaleX(0.93);">(Default)</div>
<div style="position:absolute;left:294px;top:350.1px;width:406px;height:1px;background:#f7f7f7;"></div>
<svg style="position:absolute;left:299px;top:336.6px" width="14" height="12" viewBox="0 0 14 12"><path d="M0.5 1 Q0.5 0 1.5 0 L5 0 L6.5 1.6 L12 1.6 Q13 1.6 13 2.6 L13 10.2 Q13 11 12 11 L1.5 11 Q0.5 11 0.5 10 Z" fill="#2d7dd2"/></svg>
<div class="t" style="left:313.9px;top:337.47px;font-size:11.5px;color:#222222;transform:scaleX(0.853);">HKEY_LOCAL_MACHINE\SOFTWARE\Classes\._vcsxsln80</div>
<div style="position:absolute;left:294px;top:367.0px;width:406px;height:1px;background:#f7f7f7;"></div>
<svg style="position:absolute;left:299.5px;top:352.0px" width="12" height="14" viewBox="0 0 12 14"><path d="M0.5 1 Q0.5 0 1.5 0 L6.5 0 Q8 0 9 1 L10 2 Q11 3 11 4.5 L11 12.5 Q11 13.5 10 13.5 L1.5 13.5 Q0.5 13.5 0.5 12.5 Z" fill="#2d7dd2"/><g fill="#fff"><rect x="1" y="7.2" width="3" height="1"/><rect x="2" y="7.2" width="1" height="4"/><rect x="4.6" y="7.2" width="1" height="4"/><rect x="6" y="7.2" width="3.6" height="1"/><rect x="7.3" y="7.2" width="1" height="4"/></g></svg>
<div class="t" style="left:313.9px;top:354.37px;font-size:11.5px;color:#222222;transform:scaleX(0.853);">HKEY_LOCAL_MACHINE\SOFTWARE\Classes\._vcsxsln80</div>
<div class="t" style="left:625.8px;top:354.37px;font-size:11.5px;color:#222222;transform:scaleX(0.93);">(Default)</div>
<div style="position:absolute;left:294px;top:383.9px;width:406px;height:1px;background:#f7f7f7;"></div>
<svg style="position:absolute;left:299px;top:370.4px" width="14" height="12" viewBox="0 0 14 12"><path d="M0.5 1 Q0.5 0 1.5 0 L5 0 L6.5 1.6 L12 1.6 Q13 1.6 13 2.6 L13 10.2 Q13 11 12 11 L1.5 11 Q0.5 11 0.5 10 Z" fill="#2d7dd2"/></svg>
<div class="t" style="left:313.9px;top:371.27px;font-size:11.5px;color:#222222;transform:scaleX(0.853);">HKEY_LOCAL_MACHINE\SOFTWARE\Classes\._vcsxsln90</div>
<div style="position:absolute;left:696px;top:317px;width:1px;height:16px;background:rgba(255,255,255,0.5);"></div>
<div style="position:absolute;left:299.5px;top:384px;width:10px;height:4px;background:#2d7dd2;border-radius:2px 3px 0 0;"></div>
</body></html>
